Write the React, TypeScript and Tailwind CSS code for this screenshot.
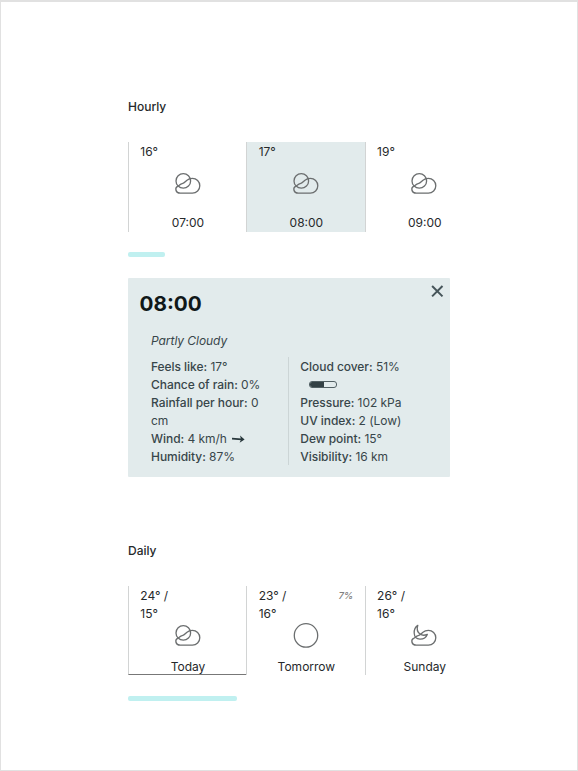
import React from "react";

type IconName = "sun-cloud" | "sun" | "moon-cloud";

function WeatherIcon({ name }: { name: IconName }) {
  return (
    <svg width="28" height="28" viewBox="0 0 28 28" fill="none" stroke="#6b6e6f" strokeWidth="1.3" strokeLinejoin="round">
      {name === "sun" && <circle cx="14" cy="13.4" r="11.7" />}
      {name !== "sun" && (
        <path d="M6.2 23.2C1.2 23.2 0.8 17.6 3.6 16.4C5.2 15.6 6.2 14 8.2 13.6C10.4 13.2 11.2 11.6 12.6 10.4C14.4 9 16 8.4 18.4 8.4A7.4 7.4 0 0 1 18.4 23.2Z" />
      )}
      {name === "sun-cloud" && <circle cx="9.3" cy="10.9" r="7.3" />}
      {name === "moon-cloud" && (
        <path d="M7.8 3.4C5.4 5 4 8 4.2 11.3C4.5 15.3 6.8 17.2 10.2 17.1C13.5 17 16.2 15.2 17.3 12.4C15 13.4 11.8 13.4 10.1 12.1C7.3 10 6.8 6.3 7.8 3.4Z" />
      )}
    </svg>
  );
}

type Slot = { temps: string[]; label: string; icon: IconName; rain?: string; state?: "selected" | "underlined" };

const hourly: Slot[] = [
  { temps: ["16°"], label: "07:00", icon: "sun-cloud" },
  { temps: ["17°"], label: "08:00", icon: "sun-cloud", state: "selected" },
  { temps: ["19°"], label: "09:00", icon: "sun-cloud" },
];

const daily: Slot[] = [
  { temps: ["24° /", "15°"], label: "Today", icon: "sun-cloud", state: "underlined" },
  { temps: ["23° /", "16°"], label: "Tomorrow", icon: "sun", rain: "7%" },
  { temps: ["26° /", "16°"], label: "Sunday", icon: "moon-cloud" },
];

function Forecast({ slots, compact }: { slots: Slot[]; compact?: boolean }) {
  return (
    <div className={`mt-[26px] flex w-[322px] overflow-hidden ${compact ? "h-[89px]" : "h-[90px]"}`}>
      {slots.map((s) => (
        <div
          key={s.label}
          className={`flex h-full w-[118.4px] shrink-0 flex-col border-l border-[#d2d4d4] ${
            s.state === "selected" ? "bg-[#e2ebec]" : ""
          } ${s.state === "underlined" ? "border-b border-b-[#777]" : ""}`}
        >
          <div className={`flex shrink-0 justify-between pt-[1px] pr-3 pl-[11.3px] ${compact ? "h-9" : "h-[27.5px]"}`}>
            <div>
              {s.temps.map((t) => (
                <div key={t}>{t}</div>
              ))}
            </div>
            {s.rain && <span className="text-[9.5px] font-medium tracking-[-0.3px] text-[#808080] italic">{s.rain}</span>}
          </div>
          <div className="flex h-7 shrink-0 justify-center pr-[0.4px]">
            <WeatherIcon name={s.icon} />
          </div>
          <div className={`shrink-0 pl-[0.6px] text-center ${compact ? "mt-2" : "mt-[16.5px]"}`}>{s.label}</div>
        </div>
      ))}
    </div>
  );
}

function Reading({ name, value, children }: { name: string; value: string; children?: React.ReactNode }) {
  return (
    <div>
      <span className="font-medium">{name}:</span> {value}
      {children}
    </div>
  );
}

export default function App() {
  return (
    <main className="h-[771px] w-[578px] border border-t-2 border-[#e1e1e1] bg-white pt-[96px] pl-[127px] font-['Inter',sans-serif] text-[12px] leading-[18px] text-[#26292b]">
      <h2 className="font-medium">Hourly</h2>
      <Forecast slots={hourly} />
      <div className="mt-5 h-[5px] w-[36.5px] rounded-[2px] bg-[#c0f0f0]" />

      <section className="mt-[21px] h-[199px] w-[322.4px] rounded-[1px] bg-[#e2ebec] text-[#38464a]">
        <div className="flex justify-between pr-[6px] pl-[11.5px]">
          <h3 className="pt-[11px] text-[20.7px] leading-[30px] font-bold text-[#101819]">08:00</h3>
          <svg className="mt-[7px]" width="13" height="13" viewBox="0 0 13 13" stroke="#46555a" strokeWidth="2">
            <path d="M1.1 1 11.5 11.4M11.5 1 1.1 11.4" />
          </svg>
        </div>
        <div className="mt-[13px] pl-[23px] tracking-[-0.05px] italic">Partly Cloudy</div>
        <div className="mt-[7px] flex h-[108px] pl-[23px] tracking-[-0.05px]">
          <div className="w-[138px] border-r border-[#ccd5d6] pt-[1px] pr-[20px]">
            <Reading name="Feels like" value="17°" />
            <Reading name="Chance of rain" value="0%" />
            <Reading name="Rainfall per hour" value="0">
              <div>cm</div>
            </Reading>
            <Reading name="Wind" value="4 km/h">
              <svg className="ml-[5px] inline-block align-[-1px]" width="13" height="9" viewBox="0 0 13 9" fill="none" stroke="#28383c" strokeWidth="1.8">
                <path d="M0 3.6 9.5 4.3" />
                <path d="M8 0.6 12.6 4.6 7.6 7.8 9 4.4Z" fill="#28383c" stroke="none" />
              </svg>
            </Reading>
            <Reading name="Humidity" value="87%" />
          </div>
          <div className="pt-[1px] pl-[11.3px]">
            <Reading name="Cloud cover" value="51%" />
            <div className="flex h-[17px] items-center pl-[9px]">
              <div className="flex h-[7px] w-[28px] overflow-hidden rounded-[3px] border border-[#526064]">
                <div className="w-[14px] bg-[#334145]" />
              </div>
            </div>
            <div className="pt-[1px]">
              <Reading name="Pressure" value="102 kPa" />
              <Reading name="UV index" value="2 (Low)" />
              <Reading name="Dew point" value="15°" />
              <Reading name="Visibility" value="16 km" />
            </div>
          </div>
        </div>
      </section>

      <h2 className="mt-[65px] font-medium">Daily</h2>
      <Forecast slots={daily} compact />
      <div className="mt-[21px] h-[5px] w-[109.4px] rounded-[2px] bg-[#c0f0f0]" />
    </main>
  );
}
